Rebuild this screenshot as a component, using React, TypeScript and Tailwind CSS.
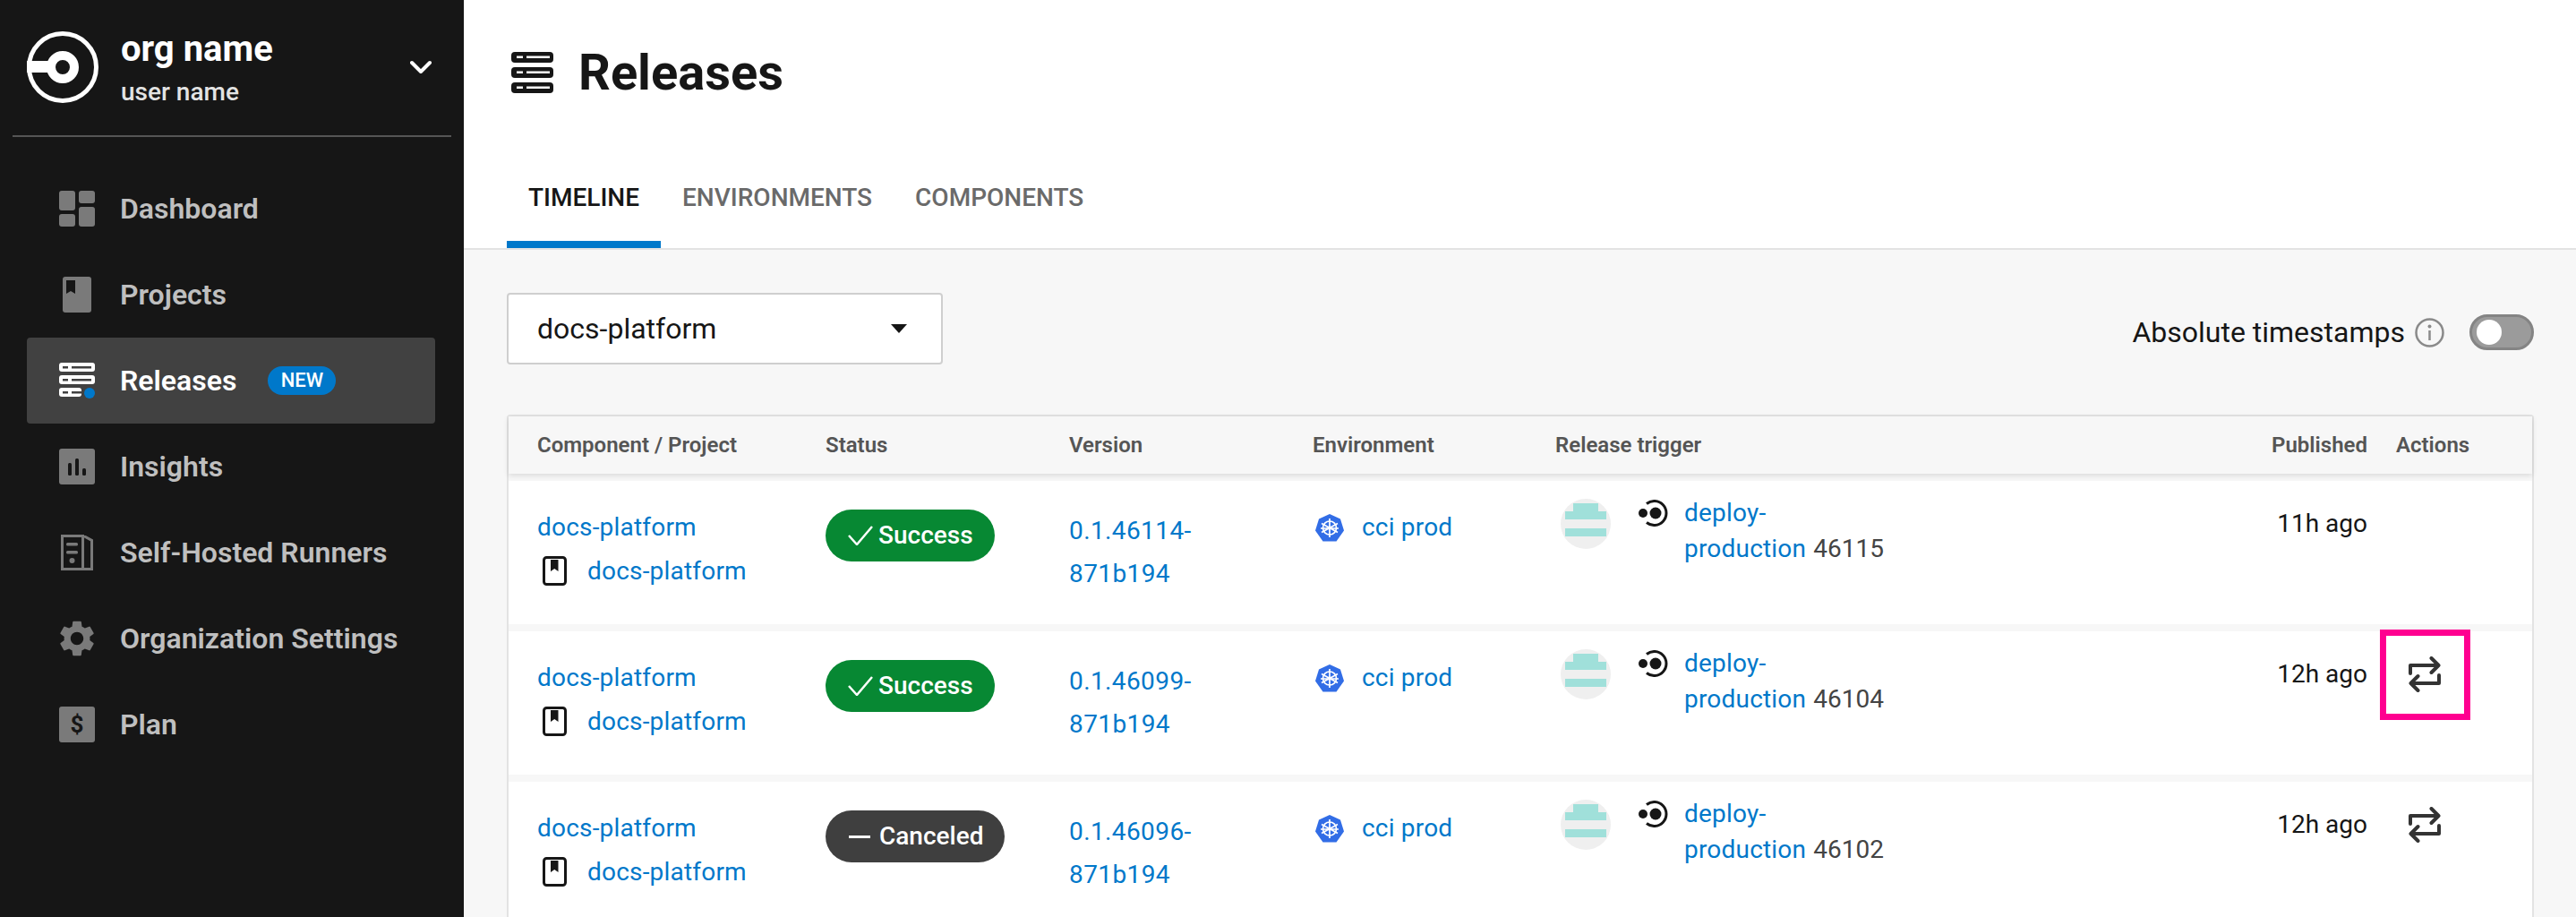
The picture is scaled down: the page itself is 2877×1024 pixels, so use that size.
// Releases timeline page with sidebar
import type { ReactNode } from "react";

const GRID_CLASS =
  "grid grid-cols-[354px_272px_272px_271px_1fr_144px_184px]";

function CircleLogo() {
  return (
    <svg width="80" height="80" viewBox="0 0 80 80" fill="none" className="shrink-0">
      <circle cx="40" cy="40" r="37.5" stroke="#fff" strokeWidth="5" />
      <rect x="0" y="33" width="30" height="13" fill="#fff" />
      <circle cx="40" cy="40" r="13" stroke="#fff" strokeWidth="10" />
    </svg>
  );
}

function DashboardIcon() {
  return (
    <svg width="40" height="40" viewBox="0 0 40 40" fill="#7a7a7a">
      <rect x="0" y="0" width="18" height="22" rx="3" />
      <rect x="0" y="26" width="18" height="14" rx="3" />
      <rect x="22" y="0" width="18" height="14" rx="3" />
      <rect x="22" y="18" width="18" height="22" rx="3" />
    </svg>
  );
}

function ProjectsIcon() {
  return (
    <svg width="40" height="40" viewBox="0 0 40 40">
      <rect x="4" y="0" width="32" height="40" rx="3" fill="#7a7a7a" />
      <path d="M8 4h10v15l-5-3-5 3z" fill="#161616" />
    </svg>
  );
}

function ReleasesIcon({ active }: { active: boolean }) {
  const pill = "#fff";
  const slot = "#414141";
  return (
    <svg width="40" height="40" viewBox="0 0 40 40">
      <rect x="0" y="0" width="40" height="10" rx="3" fill={pill} />
      <rect x="4" y="4" width="6" height="2.5" fill={slot} />
      <rect x="14" y="4" width="22" height="2.5" fill={slot} />
      <rect x="0" y="14" width="40" height="10" rx="3" fill={pill} />
      <rect x="4" y="18" width="6" height="2.5" fill={slot} />
      <rect x="14" y="18" width="22" height="2.5" fill={slot} />
      <rect x="0" y="28" width={active ? 25 : 40} height="10" rx="3" fill={pill} />
      <rect x="4" y="32" width="6" height="2.5" fill={slot} />
      <rect x="14" y="32" width="11" height="2.5" fill={slot} />
      <circle cx="34" cy="34" r="6" fill="#0078ca" />
    </svg>
  );
}

function InsightsIcon() {
  return (
    <svg width="40" height="40" viewBox="0 0 40 40">
      <rect width="40" height="40" rx="3" fill="#7a7a7a" />
      <rect x="10" y="16" width="4" height="14" rx="1.5" fill="#161616" />
      <rect x="18" y="11" width="4" height="19" rx="1.5" fill="#161616" />
      <rect x="26" y="22" width="4" height="8" rx="1.5" fill="#161616" />
    </svg>
  );
}

function RunnersIcon() {
  return (
    <svg width="40" height="40" viewBox="0 0 40 40" fill="none">
      <path d="M3.5 1.5h23v37h-23zM26.5 1.5h1l9 5v32h-10" stroke="#7a7a7a" strokeWidth="3" />
      <rect x="8" y="9" width="13" height="3.5" rx="1.5" fill="#7a7a7a" />
      <rect x="8" y="18" width="13" height="3.5" rx="1.5" fill="#7a7a7a" />
      <circle cx="14.5" cy="29" r="3" fill="#7a7a7a" />
    </svg>
  );
}

function GearIcon() {
  return (
    <svg width="40" height="40" viewBox="2.4 2 19.2 20" fill="#7a7a7a">
      <path d="M19.14 12.94c.04-.3.06-.61.06-.94 0-.32-.02-.64-.07-.94l2.03-1.58a.49.49 0 0 0 .12-.61l-1.92-3.32a.488.488 0 0 0-.59-.22l-2.39.96c-.5-.38-1.03-.7-1.62-.94l-.36-2.54a.484.484 0 0 0-.48-.41h-3.84c-.24 0-.43.17-.47.41l-.36 2.54c-.59.24-1.13.57-1.62.94l-2.39-.96c-.22-.08-.47 0-.59.22L2.74 8.87c-.12.21-.08.47.12.61l2.03 1.58c-.05.3-.09.63-.09.94s.02.64.07.94l-2.03 1.58a.49.49 0 0 0-.12.61l1.92 3.32c.12.22.37.29.59.22l2.39-.96c.5.38 1.03.7 1.62.94l.36 2.54c.05.24.24.41.48.41h3.84c.24 0 .44-.17.47-.41l.36-2.54c.59-.24 1.13-.56 1.62-.94l2.39.96c.22.08.47 0 .59-.22l1.92-3.32c.12-.22.07-.47-.12-.61l-2.01-1.58zM12 15.6c-1.98 0-3.6-1.62-3.6-3.6s1.62-3.6 3.6-3.6 3.6 1.62 3.6 3.6-1.62 3.6-3.6 3.6z" />
    </svg>
  );
}

function PlanIcon() {
  return (
    <span className="flex h-10 w-10 items-center justify-center rounded-[3px] bg-[#7a7a7a] text-[26px] font-bold leading-none text-[#161616]">
      $
    </span>
  );
}

function TitleIcon() {
  return (
    <svg width="47" height="46" viewBox="0 0 47 46" className="shrink-0">
      {[0, 17, 34].map((y) => (
        <g key={y}>
          <rect x="0" y={y} width="47" height="12" rx="4" fill="#161616" />
          <rect x="6" y={y + 4.5} width="7" height="2.5" fill="#fff" />
          <rect x="17" y={y + 4.5} width="26" height="2.5" fill="#fff" />
        </g>
      ))}
    </svg>
  );
}

function BookIcon() {
  return (
    <svg width="27" height="33" viewBox="0 0 27 33" fill="none" className="shrink-0">
      <rect x="1.5" y="1.5" width="24" height="30" rx="3" stroke="#161616" strokeWidth="3" />
      <path d="M9 4h8.5v13l-4.25-3L9 17z" fill="#161616" />
    </svg>
  );
}

function KubeIcon() {
  return (
    <svg width="32" height="31" viewBox="0 0 32 31" className="shrink-0">
      <path d="M16 0l12 5.5 4 13-8.5 12h-15L0 18.500l4-13z" fill="#326de6" />
      <g stroke="#fff" strokeWidth="1.700" fill="none">
        <circle cx="16" cy="15.500" r="7.500" />
        <path d="M16 5v21M7 10.500l18 10M25 10.500l-18 10M6 16h20" />
      </g>
      <circle cx="16" cy="15.500" r="2" fill="#fff" />
    </svg>
  );
}

function OrbIcon() {
  return (
    <svg width="34" height="30" viewBox="0 0 34 30" fill="none" className="shrink-0">
      <circle cx="5" cy="15" r="5" fill="#161616" />
      <circle cx="19" cy="15" r="6.500" fill="#161616" />
      <path d="M9 4.500A13.500 13.500 0 1 1 9 25.500" stroke="#161616" strokeWidth="3" />
    </svg>
  );
}

function RerunIcon() {
  return (
    <svg width="36" height="40" viewBox="0 0 36 40" fill="none" stroke="#333" strokeWidth="4" strokeLinecap="round" strokeLinejoin="round" className="block">
      <path d="M2 19v-9h31M25.500 2l8 8-8 8" />
      <path d="M34 21v9H3M10.500 22l-8 8 8 8" />
    </svg>
  );
}

function InfoIcon() {
  return (
    <svg width="33" height="33" viewBox="0 0 33 33" fill="none" className="shrink-0">
      <circle cx="16.500" cy="16.500" r="15" stroke="#8a8a8a" strokeWidth="2.500" />
      <circle cx="16.500" cy="9.500" r="2" fill="#8a8a8a" />
      <rect x="15.250" y="14" width="2.500" height="11" fill="#8a8a8a" />
    </svg>
  );
}

function Avatar() {
  return (
    <div className="flex h-14 w-14 shrink-0 flex-col items-center overflow-hidden rounded-full bg-[#efefef] pt-[5px]">
      <div className="h-[9px] w-[28px] bg-[#a0e0da]" />
      <div className="h-[9px] w-[46px] bg-[#a0e0da]" />
      <div className="mt-[10px] h-[9px] w-[46px] bg-[#a0e0da]" />
    </div>
  );
}

type NavItemProps = {
  label: string;
  icon: ReactNode;
  active?: boolean;
  badge?: string;
};

function NavItem({ label, icon, active, badge }: NavItemProps) {
  return (
    <div
      className={
        active
          ? "ml-[30px] mr-8 flex h-24 items-center gap-7 rounded-[4px] bg-[#414141] pl-9 text-white"
          : "ml-[30px] mr-8 flex h-24 items-center gap-7 pl-9 text-[#bfbfbf]"
      }
    >
      {icon}
      <span className="text-[32px] font-semibold leading-10">{label}</span>
      {badge ? (
        <span className="ml-[7px] flex h-8 w-[76px] items-center justify-center rounded-full bg-[#0078ca] text-[22px] font-medium leading-none text-white">
          {badge}
        </span>
      ) : null}
    </div>
  );
}

function Sidebar() {
  return (
    <aside className="w-[518px] shrink-0 bg-[#161616]">
      <div className="mx-[14px] flex h-[153px] items-center border-b-2 border-[#555] pb-[2px] pl-4 pr-[22px]">
        <CircleLogo />
        <div className="ml-[25px] flex-1 pt-[4px] text-white">
          <div className="text-[40px] font-bold leading-[48px]">org name</div>
          <div className="pt-1 text-[28px] font-medium leading-[40px] text-[#e3e3e3]">user name</div>
        </div>
        <svg width="24" height="16" viewBox="0 0 24 16" fill="none" stroke="#fff" strokeWidth="4" strokeLinecap="round" strokeLinejoin="round">
          <path d="M2 3l10 10L22 3" />
        </svg>
      </div>
      <nav className="mt-8">
        <NavItem label="Dashboard" icon={<DashboardIcon />} />
        <NavItem label="Projects" icon={<ProjectsIcon />} />
        <NavItem label="Releases" icon={<ReleasesIcon active />} active badge="NEW" />
        <NavItem label="Insights" icon={<InsightsIcon />} />
        <NavItem label="Self-Hosted Runners" icon={<RunnersIcon />} />
        <NavItem label="Organization Settings" icon={<GearIcon />} />
        <NavItem label="Plan" icon={<PlanIcon />} />
      </nav>
    </aside>
  );
}

function PageHeader() {
  return (
    <header className="border-b-2 border-[#e3e3e3] bg-white">
      <div className="flex h-[163px] items-start pl-[53px] pt-[58px]">
        <TitleIcon />
        <h1 className="ml-7 text-[56px] font-bold leading-[46px] text-[#161616]">Releases</h1>
      </div>
      <div className="flex h-[114px] items-end pl-12">
        <div className="flex h-full items-center border-b-8 border-[#0078ca] px-6 pt-[10px] text-[28px] font-medium text-[#161616]">
          TIMELINE
        </div>
        <div className="flex h-full items-center border-b-8 border-transparent px-6 pt-[10px] text-[28px] font-medium text-[#6a6a6a]">
          ENVIRONMENTS
        </div>
        <div className="flex h-full items-center border-b-8 border-transparent px-6 pt-[10px] text-[28px] font-medium text-[#6a6a6a]">
          COMPONENTS
        </div>
      </div>
    </header>
  );
}

function Toolbar() {
  return (
    <div className="flex items-start justify-between">
      <div className="flex h-20 w-[487px] items-center justify-between rounded-[4px] border-2 border-[#cfcfcf] bg-white pl-8 pr-[38px]">
        <span className="text-[32px] leading-10 text-[#161616]">docs-platform</span>
        <span className="h-0 w-0 border-x-[9px] border-t-[10px] border-x-transparent border-t-[#161616]" />
      </div>
      <div className="flex h-20 items-center pt-[8px]">
        <span className="text-[32px] leading-10 text-[#161616]">Absolute timestamps</span>
        <span className="ml-[11px]">
          <InfoIcon />
        </span>
        <div className="ml-7 flex h-10 w-[72px] items-center rounded-full border-[3px] border-[#848484] bg-[#9b9b9b] pl-[5px]">
          <div className="h-7 w-7 rounded-full bg-white" />
        </div>
      </div>
    </div>
  );
}

type Status = "success" | "canceled";

type Release = {
  version: string;
  status: Status;
  build: string;
  published: string;
  action?: boolean;
  highlighted?: boolean;
};

const RELEASES: Release[] = [
  { version: "0.1.46114-", status: "success", build: "46115", published: "11h ago" },
  { version: "0.1.46099-", status: "success", build: "46104", published: "12h ago", action: true, highlighted: true },
  { version: "0.1.46096-", status: "canceled", build: "46102", published: "12h ago", action: true },
];

function StatusBadge({ status }: { status: Status }) {
  if (status === "canceled") {
    return (
      <span className="flex h-[58px] w-[200px] items-center rounded-full bg-[#3f3f3f] pl-[26px] text-[28px] font-medium text-white">
        <span className="h-[3px] w-6 bg-white" />
        <span className="ml-[10px]">Canceled</span>
      </span>
    );
  }
  return (
    <span className="flex h-[58px] w-[189px] items-center rounded-full bg-[#078833] pl-[25px] text-[28px] font-medium text-white">
      <svg width="28" height="22" viewBox="0 0 28 22" fill="none" stroke="#fff" strokeWidth="2.500" className="shrink-0">
        <path d="M1 11l9 10L27 1" />
      </svg>
      <span className="ml-[6px]">Success</span>
    </span>
  );
}

function ReleaseRow({ release, last }: { release: Release; last: boolean }) {
  return (
    <div className={last ? `${GRID_CLASS} h-[160px] bg-white` : `${GRID_CLASS} mb-2 h-[160px] bg-white`}>
      <div className="pl-8 pt-7 tracking-[0.2px] text-[#0078ca]">
        <div className="text-[28px] leading-[48px]">docs-platform</div>
        <div className="flex h-[49px] items-center pl-[6px] text-[28px]">
          <BookIcon />
          <span className="ml-[23px]">docs-platform</span>
        </div>
      </div>
      <div className="pt-8">
        <StatusBadge status={release.status} />
      </div>
      <div className="pt-8 text-[28px] leading-[48px] tracking-[0.4px] text-[#0078ca]">
        <div>{release.version}</div>
        <div>871b194</div>
      </div>
      <div className="flex h-[76px] items-center pl-[3px] pt-7 text-[28px] tracking-[0.2px] text-[#0078ca]">
        <KubeIcon />
        <span className="ml-5">cci prod</span>
      </div>
      <div className="flex items-start pl-[6px] pt-5">
        <Avatar />
        <div className="ml-[31px] pt-[1px]">
          <OrbIcon />
        </div>
        <div className="ml-[17px] -mt-1 text-[28px] leading-10 tracking-[0.2px]">
          <div className="text-[#0078ca]">deploy-</div>
          <div>
            <span className="text-[#0078ca]">production</span>
            <span className="ml-2 tracking-normal text-[#444]">{release.build}</span>
          </div>
        </div>
      </div>
      <div className="pt-6 text-right text-[28px] leading-[48px] text-[#161616]">{release.published}</div>
      <div className="pl-[46px] pt-7">
        {release.action ? (
          <div className="relative w-9">
            <RerunIcon />
            {release.highlighted ? (
              <div className="absolute -left-8 -top-[30px] h-[101px] w-[101px] border-[7px] border-[#ff0090]" />
            ) : null}
          </div>
        ) : null}
      </div>
    </div>
  );
}

function ReleasesTable() {
  return (
    <div className="mt-14 rounded-t-[4px] border-x-2 border-t-2 border-[#e3e3e3]">
      <div className={`${GRID_CLASS} relative z-10 h-16 items-center bg-[#f7f7f7] text-[24px] font-semibold text-[#555] shadow-[0_2px_6px_rgba(0,0,0,0.12)]`}>
        <div className="pl-8">Component / Project</div>
        <div>Status</div>
        <div>Version</div>
        <div>Environment</div>
        <div>Release trigger</div>
        <div className="text-right">Published</div>
        <div className="pl-8">Actions</div>
      </div>
      <div className="h-2" />
      {RELEASES.map((release, index) => (
        <ReleaseRow key={release.build} release={release} last={index === RELEASES.length - 1} />
      ))}
    </div>
  );
}

export default function App() {
  return (
    <div className="flex h-[1024px] overflow-hidden bg-[#f7f7f7] font-['Roboto',sans-serif]">
      <Sidebar />
      <main className="min-w-0 flex-1">
        <PageHeader />
        <div className="pl-12 pr-[47px] pt-12">
          <Toolbar />
          <ReleasesTable />
        </div>
      </main>
    </div>
  );
}
